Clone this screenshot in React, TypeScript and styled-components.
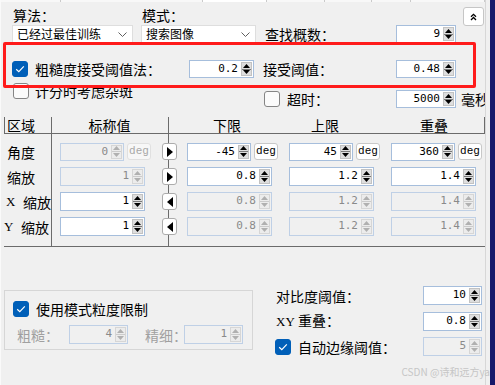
import React from 'react'
import styled, { createGlobalStyle } from 'styled-components'

const GlobalStyle = createGlobalStyle`
  html, body {
    margin: 0;
    padding: 0;
    background: #f0f0f0;
  }
  body {
    font-family: 'Noto Sans CJK SC', 'Noto Sans', sans-serif;
    font-size: 14px;
    color: #000;
  }
`

const Screen = styled.div`
  position: relative;
  width: 495px;
  height: 385px;
  display: flex;
  overflow: hidden;
  background: #f0f0f0;
`

const Panel = styled.div`
  position: relative;
  width: 486px;
  height: 385px;
  flex: none;
  box-sizing: border-box;
  border-left: 1px solid #fafafa;
  border-right: 1px solid #d7d7d7;
  display: flex;
  flex-direction: column;
  overflow: hidden;
`

const Gutter = styled.div`
  width: 4px;
  flex: none;
  background: #f0f0f0;
`

const Backdrop = styled.div`
  flex: 1;
  background: #17186a;
`

const TabStrip = styled.div`
  display: flex;
  height: 2px;
  flex: none;
`

const TabEdge = styled.div<{ $w?: number; $active?: boolean }>`
  width: ${p => (p.$w ? `${p.$w}px` : 'auto')};
  flex: ${p => (p.$w ? 'none' : '1')};
  box-sizing: border-box;
  border-right: 1px solid #cacaca;
  background: ${p => (p.$active ? '#ffffff' : '#f8f8f8')};
`

// --- top area ---

const Top = styled.div`
  display: flex;
  height: 115px;
  flex: none;
  padding-left: 11px;
`

const LeftCol = styled.div`
  width: 244px;
  display: flex;
  flex-direction: column;
`

const RightCol = styled.div`
  width: 222px;
  margin-left: 7px;
  display: flex;
  flex-direction: column;
`

const Line = styled.div<{ $mt: number; $h: number }>`
  display: flex;
  align-items: center;
  flex: none;
  margin-top: ${p => p.$mt}px;
  height: ${p => p.$h}px;
`

const CaptionRow = styled(Line)`
  display: grid;
  grid-template-columns: 129px auto;
  padding-left: 1px;
`

const ComboRow = styled(Line)`
  gap: 8px;
`

const ThresholdRow = styled(Line)`
  justify-content: space-between;
  padding-right: 2px;
`

const CheckGroup = styled.label<{ $gap: number; $ml?: number }>`
  display: flex;
  align-items: center;
  gap: ${p => p.$gap}px;
  margin-left: ${p => p.$ml ?? 0}px;
`

const FieldRow = styled(Line)`
  display: grid;
  grid-template-columns: 133px 60px auto;
`

const CollapseRow = styled(Line)`
  justify-content: flex-end;
  padding-right: 1px;
`

const Label = styled.span<{ $muted?: boolean; $w?: number; $pl?: number }>`
  font-size: 14px;
  line-height: 18px;
  white-space: nowrap;
  color: ${p => (p.$muted ? '#a0a0a0' : '#000')};
  width: ${p => (p.$w ? `${p.$w}px` : 'auto')};
  padding-left: ${p => p.$pl ?? 0}px;
  flex: none;
  box-sizing: border-box;
`

const Unit = styled.span`
  font-size: 14px;
  line-height: 18px;
  margin-left: 5px;
  white-space: nowrap;
`

const Axis = styled.span<{ $w: number }>`
  display: inline-block;
  width: ${p => p.$w}px;
  font-family: 'Liberation Serif', 'DejaVu Serif', serif;
  font-size: 13px;
`

const Combo = styled.div<{ $w: number }>`
  width: ${p => p.$w}px;
  height: 18px;
  box-sizing: border-box;
  background: #fff;
  border: 1px solid #dedede;
  border-bottom-color: #c4c4c4;
  display: flex;
  align-items: center;
  justify-content: space-between;
  padding: 0 5px 0 4px;
  font-size: 12px;
  line-height: 16px;
  white-space: nowrap;
`

const CollapseButton = styled.button`
  width: 21px;
  height: 19px;
  padding: 0;
  box-sizing: border-box;
  border: 1px solid #c6c6c6;
  border-radius: 3px;
  background: #fff;
  display: flex;
  align-items: center;
  justify-content: center;
`

// --- check box ---

const Box = styled.span<{ $on?: boolean }>`
  width: 16px;
  height: 16px;
  flex: none;
  box-sizing: border-box;
  border-radius: 3px;
  border: 1px solid ${p => (p.$on ? '#005fb8' : '#858585')};
  background: ${p => (p.$on ? '#005fb8' : '#fbfbfb')};
  display: inline-flex;
  align-items: center;
  justify-content: center;
`

const Check = ({ on }: { on?: boolean }) => (
  <Box $on={on}>
    {on && (
      <svg width="10" height="8" viewBox="0 0 10 8">
        <polyline points="1.2,4.2 3.8,6.6 8.8,1.4" fill="none" stroke="#fff" strokeWidth="1.2" />
      </svg>
    )}
  </Box>
)

// --- spin field ---

const Tri = ({ dir, color, w = 7, h = 4 }: { dir: 'up' | 'down' | 'left' | 'right'; color: string; w?: number; h?: number }) => {
  const pts = {
    up: `0,${h} ${w / 2},0 ${w},${h}`,
    down: `0,0 ${w},0 ${w / 2},${h}`,
    right: `0,0 ${w},${h / 2} 0,${h}`,
    left: `${w},0 0,${h / 2} ${w},${h}`,
  }[dir]
  return (
    <svg width={w} height={h} viewBox={`0 0 ${w} ${h}`}>
      <polygon points={pts} fill={color} />
    </svg>
  )
}

const SpinBox = styled.div<{ $w: number; $h: number; $off?: boolean }>`
  width: ${p => p.$w}px;
  height: ${p => p.$h}px;
  flex: none;
  box-sizing: border-box;
  border: 1px solid ${p => (p.$off ? '#bfd0e6' : '#a6bedc')};
  background: ${p => (p.$off ? '#f0f0f0' : '#fff')};
  display: flex;
`

const SpinValue = styled.span<{ $off?: boolean }>`
  flex: 1;
  text-align: right;
  padding-right: 3px;
  font-family: 'DejaVu Sans Mono', 'Liberation Mono', monospace;
  font-size: 11px;
  line-height: 16px;
  color: ${p => (p.$off ? '#8a8a8a' : '#000')};
  white-space: nowrap;
  overflow: hidden;
`

const SpinArrows = styled.div<{ $off?: boolean }>`
  width: 11px;
  margin: 1px 1px 1px 0;
  display: flex;
  flex-direction: column;
  background: ${p => (p.$off ? '#ececec' : '#dedede')};
  border: 1px solid ${p => (p.$off ? '#d6d6d6' : '#c2c2c2')};
  box-sizing: border-box;
`

const SpinHalf = styled.div<{ $off?: boolean; $top?: boolean }>`
  flex: 1;
  display: flex;
  align-items: center;
  justify-content: center;
  border-bottom: ${p => (p.$top ? `1px solid ${p.$off ? '#cbcbcb' : '#7a7a7a'}` : 'none')};
`

type FieldProps = { value: string; w: number; h?: number; off?: boolean }

const Field = ({ value, w, h = 18, off }: FieldProps) => {
  const c = off ? '#b0b0b0' : '#000'
  return (
    <SpinBox $w={w} $h={h} $off={off}>
      <SpinValue $off={off}>{value}</SpinValue>
      <SpinArrows $off={off}>
        <SpinHalf $off={off} $top>
          <Tri dir="up" color={c} />
        </SpinHalf>
        <SpinHalf $off={off}>
          <Tri dir="down" color={c} />
        </SpinHalf>
      </SpinArrows>
    </SpinBox>
  )
}

// --- range table ---

const Table = styled.div`
  margin-left: 3px;
  width: 481px;
  flex: none;
  border-bottom: 1px solid #6b6b6b;
  background:
    linear-gradient(#6b6b6b, #6b6b6b) 47px 0 / 1px 100% no-repeat,
    linear-gradient(#6b6b6b, #6b6b6b) 164px 0 / 1px 100% no-repeat;
`

const HeadRow = styled.div`
  display: grid;
  grid-template-columns: 46px 117px 118px 98px auto;
  height: 16px;
  border: 1px solid #6b6b6b;
  border-top: none;
`

const HeadCell = styled.div<{ $left?: boolean; $shift?: number }>`
  font-size: 14px;
  line-height: 16px;
  text-align: ${p => (p.$left ? 'left' : 'center')};
  padding-left: ${p => (p.$left ? 2 : 0)}px;
  padding-right: ${p => p.$shift ?? 0}px;
  white-space: nowrap;
`

const Body = styled.div`
  display: flex;
  flex-direction: column;
  gap: 6px;
  padding: 8px 0 10px;
`

const BodyRow = styled.div`
  display: flex;
  align-items: center;
  height: 19px;
`

const RowLabel = styled.div<{ $pl: number }>`
  width: 47px;
  flex: none;
  box-sizing: border-box;
  padding-left: ${p => p.$pl}px;
  font-size: 14px;
  line-height: 18px;
  white-space: nowrap;
  display: flex;
  align-items: center;
`

const NominalCell = styled.div`
  width: 111px;
  flex: none;
  box-sizing: border-box;
  padding-left: 9px;
  display: flex;
  align-items: center;
  gap: 3px;
`

const ArrowCell = styled.div`
  width: 15px;
  flex: none;
  margin-right: 10px;
`

const ValueCell = styled.div`
  width: 102px;
  flex: none;
  display: flex;
  align-items: center;
  gap: 3px;
`

const ArrowButton = styled.button`
  width: 15px;
  height: 17px;
  padding: 0;
  box-sizing: border-box;
  border: 1px solid #acacac;
  border-radius: 3px;
  background: #fff;
  display: flex;
  align-items: center;
  justify-content: center;
`

const DegButton = styled.button<{ $off?: boolean }>`
  width: 24px;
  height: 17px;
  flex: none;
  padding: 0;
  box-sizing: border-box;
  border: 1px solid ${p => (p.$off ? '#e0e0e0' : '#c8c8c8')};
  border-radius: 3px;
  background: ${p => (p.$off ? '#f7f7f7' : '#fff')};
  color: ${p => (p.$off ? '#a8a8a8' : '#000')};
  font-family: 'Liberation Mono', 'DejaVu Sans Mono', monospace;
  font-size: 11px;
  line-height: 15px;
`

// --- bottom area ---

const Bottom = styled.div`
  display: flex;
  flex: 1;
`

const GroupBox = styled.div`
  margin: 43px 0 0 3px;
  width: 249px;
  height: 60px;
  box-sizing: border-box;
  border: 1px solid #d6d6d6;
  padding: 9px 0 0 8px;
  display: flex;
  flex-direction: column;
`

const GrainRow = styled.div`
  display: flex;
  align-items: center;
  height: 19px;
  margin: 7px 0 0 4px;
`

const ContrastBlock = styled.div`
  margin: 39px 0 0 23px;
  display: flex;
  flex-direction: column;
`

const ContrastRow = styled.div<{ $mt: number }>`
  display: grid;
  grid-template-columns: 147px 59px;
  align-items: center;
  height: 19px;
  margin-top: ${p => p.$mt}px;
`

// overlays
const Highlight = styled.div`
  position: absolute;
  left: 2px;
  top: 42px;
  width: 473px;
  height: 46px;
  box-sizing: border-box;
  border: 3px solid #ff1b1b;
  border-radius: 2px;
  pointer-events: none;
`

const Watermark = styled.div`
  position: absolute;
  right: 5px;
  top: 366px;
  font-size: 10px;
  line-height: 12px;
  color: #c6c6c6;
  white-space: nowrap;
`

type Val = { v: string; off?: boolean }
type RangeRow = {
  label: React.ReactNode
  pl: number
  deg: boolean
  dir: 'left' | 'right'
  nom: Val
  lo: Val
  hi: Val
  ov: Val
}

const rows: RangeRow[] = [
  { label: '角度', pl: 3, deg: true, dir: 'right', nom: { v: '0', off: true }, lo: { v: '-45' }, hi: { v: '45' }, ov: { v: '360' } },
  { label: '缩放', pl: 3, deg: false, dir: 'right', nom: { v: '1', off: true }, lo: { v: '0.8' }, hi: { v: '1.2' }, ov: { v: '1.4' } },
  {
    label: <><Axis $w={17}>X</Axis>缩放</>,
    pl: 2, deg: false, dir: 'left',
    nom: { v: '1' }, lo: { v: '0.8', off: true }, hi: { v: '1.2', off: true }, ov: { v: '1.4', off: true },
  },
  {
    label: <><Axis $w={17}>Y</Axis>缩放</>,
    pl: 0, deg: false, dir: 'left',
    nom: { v: '1' }, lo: { v: '0.8', off: true }, hi: { v: '1.2', off: true }, ov: { v: '1.4', off: true },
  },
]

const RangeValue = ({ val, deg, degOff, w }: { val: Val; deg: boolean; degOff?: boolean; w: number }) =>
  deg ? (
    <>
      <Field value={val.v} w={w} off={val.off} />
      <DegButton $off={degOff}>deg</DegButton>
    </>
  ) : (
    <Field value={val.v} w={85} h={19} off={val.off} />
  )

const Chevron = () => (
  <svg width="9" height="5" viewBox="0 0 9 5">
    <polyline points="0.5,0.5 4.5,4.5 8.5,0.5" fill="none" stroke="#5f5f5f" strokeWidth="1" />
  </svg>
)

const DoubleUp = () => (
  <svg width="7" height="8" viewBox="0 0 7 8">
    <polyline points="1,3.8 3.5,1.3 6,3.8" fill="none" stroke="#000" strokeWidth="1.3" />
    <polyline points="1,7 3.5,4.5 6,7" fill="none" stroke="#000" strokeWidth="1.3" />
  </svg>
)

export default function App () {
  return (
    <Screen>
      <GlobalStyle />
      <Panel>
        <TabStrip>
          <TabEdge $w={60} />
          <TabEdge $w={142} />
          <TabEdge $w={64} $active />
          <TabEdge $w={58} />
          <TabEdge $w={47} />
          <TabEdge $w={39} />
          <TabEdge />
        </TabStrip>

        <Top>
          <LeftCol>
            <CaptionRow $mt={4} $h={17}>
              <Label>算法：</Label>
              <Label>模式：</Label>
            </CaptionRow>
            <ComboRow $mt={2} $h={18}>
              <Combo $w={121}>已经过最佳训练<Chevron /></Combo>
              <Combo $w={115}>搜索图像<Chevron /></Combo>
            </ComboRow>
            <ThresholdRow $mt={17} $h={18}>
              <CheckGroup $gap={7}>
                <Check on />
                <Label>粗糙度接受阈值法：</Label>
              </CheckGroup>
              <Field value="0.2" w={65} />
            </ThresholdRow>
            <Line $mt={5} $h={16}>
              <CheckGroup $gap={6} $ml={1}>
                <Check />
                <Label>计分时考虑杂斑</Label>
              </CheckGroup>
            </Line>
          </LeftCol>

          <RightCol>
            <CollapseRow $mt={5} $h={19}>
              <CollapseButton><DoubleUp /></CollapseButton>
            </CollapseRow>
            <FieldRow $mt={-1} $h={18}>
              <Label $pl={2}>查找概数：</Label>
              <Field value="9" w={60} />
            </FieldRow>
            <FieldRow $mt={17} $h={18}>
              <Label>接受阈值：</Label>
              <Field value="0.48" w={60} />
            </FieldRow>
            <FieldRow $mt={12} $h={18}>
              <CheckGroup $gap={7} $ml={1}>
                <Check />
                <Label>超时：</Label>
              </CheckGroup>
              <Field value="5000" w={60} />
              <Unit>毫秒</Unit>
            </FieldRow>
          </RightCol>
        </Top>

        <Table>
          <HeadRow>
            <HeadCell $left>区域</HeadCell>
            <HeadCell>标称值</HeadCell>
            <HeadCell>下限</HeadCell>
            <HeadCell $shift={20}>上限</HeadCell>
            <HeadCell>重叠</HeadCell>
          </HeadRow>
          <Body>
            {rows.map((r, i) => (
              <BodyRow key={i}>
                <RowLabel $pl={r.pl}>{r.label}</RowLabel>
                <NominalCell>
                  <RangeValue val={r.nom} deg={r.deg} degOff w={64} />
                </NominalCell>
                <ArrowCell>
                  <ArrowButton>
                    <Tri dir={r.dir} color="#000" w={6} h={10} />
                  </ArrowButton>
                </ArrowCell>
                <ValueCell><RangeValue val={r.lo} deg={r.deg} w={64} /></ValueCell>
                <ValueCell><RangeValue val={r.hi} deg={r.deg} w={64} /></ValueCell>
                <ValueCell><RangeValue val={r.ov} deg={r.deg} w={64} /></ValueCell>
              </BodyRow>
            ))}
          </Body>
        </Table>

        <Bottom>
          <GroupBox>
            <CheckGroup $gap={7}>
              <Check on />
              <Label>使用模式粒度限制</Label>
            </CheckGroup>
            <GrainRow>
              <Label $muted $w={52}>粗糙：</Label>
              <Field value="4" w={59} h={19} off />
              <Label $muted $w={56} $pl={17}>精细：</Label>
              <Field value="1" w={59} h={19} off />
            </GrainRow>
          </GroupBox>

          <ContrastBlock>
            <ContrastRow $mt={0}>
              <Label>对比度阈值：</Label>
              <Field value="10" w={59} h={19} />
            </ContrastRow>
            <ContrastRow $mt={6}>
              <Label><Axis $w={22}>XY</Axis>重叠：</Label>
              <Field value="0.8" w={59} h={19} />
            </ContrastRow>
            <ContrastRow $mt={7}>
              <CheckGroup $gap={7} $ml={-1}>
                <Check on />
                <Label>自动边缘阈值：</Label>
              </CheckGroup>
              <Field value="5" w={59} h={19} off />
            </ContrastRow>
          </ContrastBlock>
        </Bottom>

        <Highlight />
      </Panel>
      <Gutter />
      <Backdrop />
      <Watermark>CSDN @诗和远方ya</Watermark>
    </Screen>
  )
}
